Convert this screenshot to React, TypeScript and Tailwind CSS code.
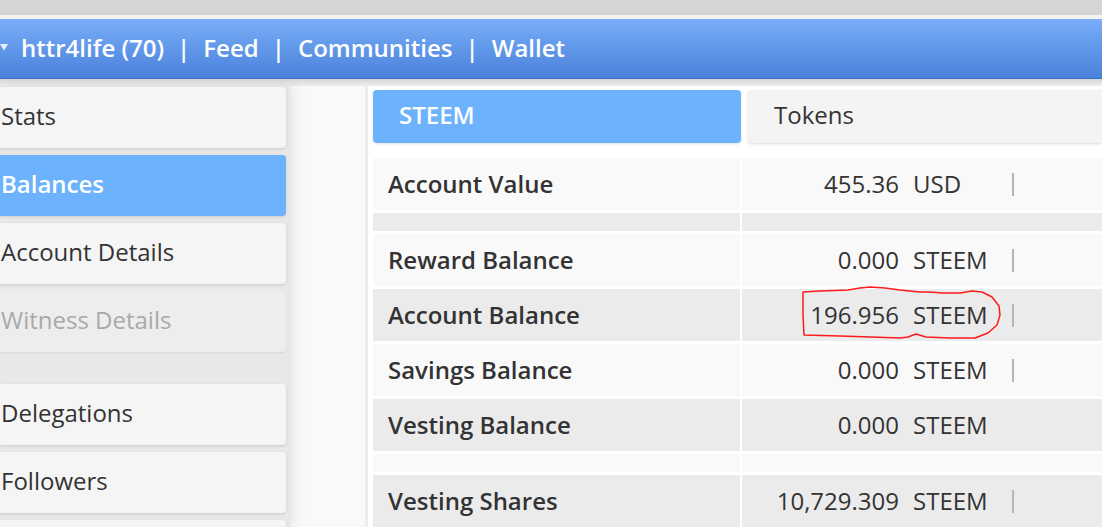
import React from "react";

type Row =
  | { kind: "spacer" }
  | { kind: "row"; label: string; amount: string; unit: string; bar?: boolean; marked?: boolean };

const menuTop = ["Stats", "Balances", "Account Details", "Witness Details"];
const menuBottom = ["Delegations", "Followers", ""];

const rows: Row[] = [
  { kind: "row", label: "Account Value", amount: "455.36", unit: "USD", bar: true },
  { kind: "spacer" },
  { kind: "row", label: "Reward Balance", amount: "0.000", unit: "STEEM", bar: true },
  { kind: "row", label: "Account Balance", amount: "196.956", unit: "STEEM", bar: true, marked: true },
  { kind: "row", label: "Savings Balance", amount: "0.000", unit: "STEEM", bar: true },
  { kind: "row", label: "Vesting Balance", amount: "0.000", unit: "STEEM" },
  { kind: "spacer" },
  { kind: "row", label: "Vesting Shares", amount: "10,729.309", unit: "STEEM", bar: true },
];

function MenuItem({ label }: { label: string }) {
  const active = label === "Balances";
  const disabled = label === "Witness Details";
  return (
    <div
      className={`h-[61px] w-[286px] shrink-0 rounded-r-[4px] flex items-center pl-[1px] pb-[3px] text-[24px] ${
        active
          ? "bg-[#6cb2fd] text-white font-semibold shadow-[0_1px_3px_rgba(0,0,0,0.12)]"
          : disabled
          ? "bg-[#ededed] text-[#a9a9a9] shadow-[0_1px_2px_rgba(0,0,0,0.07)]"
          : "bg-[#f5f5f5] text-[#333] shadow-[0_1px_3px_rgba(0,0,0,0.14)]"
      }`}
    >
      {label}
    </div>
  );
}

// hand-drawn red loop around a value
function Scribble() {
  return (
    <svg
      className="absolute left-[58px] top-[-4px] pointer-events-none"
      width="206"
      height="58"
      viewBox="0 0 206 58"
      fill="none"
    >
      <path
        d="M3 7 L3 30 L4 50 L40 51 L71 52 L100 53 L108 52 L116 49 L126 52 L150 53 L175 53 L188 48 L197 40 L200 30 L199 21 L192 12 L182 7 L172 6 L160 8 L142 8 L130 7 L120 7 L100 5 L85 3 L70 2 L60 3 L48 5 L20 6 Z"
        stroke="#ff1b1b"
        strokeWidth="1.5"
        strokeLinejoin="round"
      />
    </svg>
  );
}

export default function App() {
  return (
    <div className="h-[527px] w-[1102px] overflow-hidden bg-[#f9f9f9] font-['Open_Sans',sans-serif] text-[#333]">
      <div className="h-[15px] bg-[#d5d5d5]" />
      <div className="h-[4px] bg-[#f3f3f3]" />
      <header className="h-[60px] flex items-center gap-[13px] pb-[2px] bg-gradient-to-b from-[#79adf9] to-[#4a82da] border-b border-[#3b72cc] text-white text-[24px] font-semibold">
        <svg width="8" height="7" viewBox="0 0 8 7" className="shrink-0">
          <polygon points="0,0 8,0 4,6.5" fill="#e9eef9" />
        </svg>
        <span>httr4life (70)</span>
        <span>|</span>
        <span>Feed</span>
        <span>|</span>
        <span>Communities</span>
        <span>|</span>
        <span>Wallet</span>
      </header>
      <div className="h-[7px] bg-gradient-to-b from-[#d6d6d6] to-[#ededed]" />

      <div className="flex h-[441px]">
        <aside className="relative z-10 w-[291px] shrink-0 bg-[#e8e8e8] flex flex-col gap-[7px] pt-[1px] shadow-[4px_0_12px_rgba(0,0,0,0.07)]">
          {menuTop.map((m) => (
            <MenuItem key={m} label={m} />
          ))}
          <div className="h-[18px] shrink-0" />
          {menuBottom.map((m, i) => (
            <MenuItem key={i} label={m} />
          ))}
        </aside>

        <div className="w-[74px] shrink-0" />

        <main className="flex-1 min-w-0 bg-white border-l-[3px] border-[#ececec] pl-[5px] pt-[4px]">
          <div className="flex gap-[7px] h-[53px]">
            <div className="w-[368px] shrink-0 rounded-[4px] bg-[#6cb2fd] text-white font-semibold text-[24px] flex items-center pl-[26px] pb-[3px] shadow-[0_1px_3px_rgba(0,0,0,0.12)]">
              STEEM
            </div>
            <div className="flex-1 rounded-l-[4px] bg-[#f4f4f4] text-[24px] flex items-center pl-[26px] pb-[3px] shadow-[0_1px_3px_rgba(0,0,0,0.15)]">
              Tokens
            </div>
          </div>

          <div className="mt-[15px] flex flex-col gap-[3px]">
            {rows.map((r, i) => {
              const bg = i % 2 === 0 ? "bg-[#f9f9f9]" : "bg-[#ebebeb]";
              if (r.kind === "spacer") {
                return (
                  <div key={i} className="flex gap-[2px] h-[18px]">
                    <div className={`w-[367px] shrink-0 ${bg}`} />
                    <div className={`flex-1 ${bg}`} />
                  </div>
                );
              }
              return (
                <div key={i} className="flex gap-[2px] h-[52px] text-[24px]">
                  <div className={`w-[367px] shrink-0 ${bg} flex items-center pl-[15px] font-semibold`}>
                    {r.label}
                  </div>
                  <div className={`relative flex-1 ${bg} flex items-center`}>
                    <span className="w-[157px] text-right">{r.amount}</span>
                    <span className="w-[86px] ml-[14px]">{r.unit}</span>
                    {r.bar && <span className="ml-[13px] w-[2px] h-[23px] bg-[#b5b5b5]" />}
                    {r.marked && <Scribble />}
                  </div>
                </div>
              );
            })}
          </div>
        </main>
      </div>
    </div>
  );
}
